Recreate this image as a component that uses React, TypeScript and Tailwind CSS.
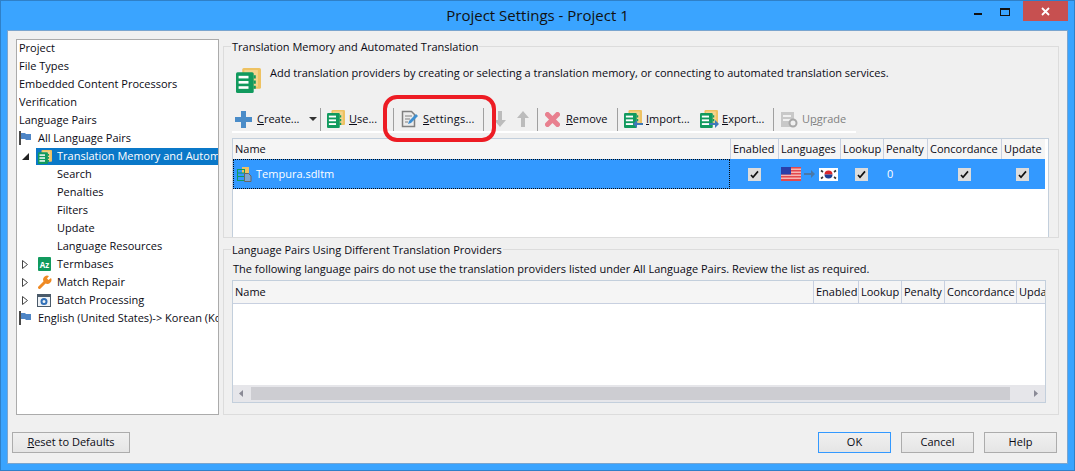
import type { ReactNode } from 'react';

const TmIcon = ({ size = 18 }: { size?: number }) => (
  <svg width={size} height={size} viewBox="0 0 24 24" className="shrink-0">
    <rect x="6" y="0" width="18" height="20" rx="1.500" fill="#eec262" />
    <rect x="8" y="2" width="13" height="16" fill="#f3d48e" />
    <rect x="0" y="4" width="17" height="20" rx="1.500" fill="#119a5e" />
    <rect x="2.500" y="7.500" width="9.500" height="2.500" fill="#fff" />
    <rect x="2.500" y="12.500" width="9.500" height="2.500" fill="#fff" />
    <rect x="2.500" y="17.500" width="9.500" height="2.500" fill="#fff" />
    <path d="M17 7h2v3h-2zM17 12h2v3h-2zM17 17h2v3h-2z" fill="#119a5e" />
  </svg>
);

// outline version used on the selected grid row
const TmFileIcon = () => (
  <svg width="15" height="15" viewBox="0 0 15 15" className="shrink-0">
    <rect x="5" y="0" width="7" height="6" fill="#eec262" />
    <rect x=".5" y="2.500" width="7" height="11" fill="none" stroke="#119a5e" />
    <path d="M1 6h6M1 9.500h6" stroke="#119a5e" />
    <path d="M7.500 6.500h4l2.500 2.500v5.500h-6.500z" fill="#7fa6cf" stroke="#666" />
  </svg>
);

const Flag = ({ className = '' }: { className?: string }) => (
  <svg width="13" height="14" viewBox="0 0 13 14" className={`shrink-0 ${className}`}>
    <rect x="0" y="0" width="2" height="14" fill="#4a4a4a" />
    <path d="M2 2h4l1 1h5v6H7L6 8H2z" fill="#4f86c6" />
  </svg>
);

const Check = () => (
  <span className="flex h-[13px] w-[13px] shrink-0 items-center justify-center bg-[#dcdcdc]">
    <svg width="9" height="9" viewBox="0 0 9 9">
      <path d="M1 5l2 2.200L8 1.400" fill="none" stroke="#111" strokeWidth="1.700" />
    </svg>
  </span>
);

const UsFlag = () => (
  <svg width="20" height="14" viewBox="0 0 20 14" className="shrink-0">
    <rect width="20" height="14" fill="#f6b5b0" />
    <path d="M0 0h20v1.500H0zM0 3h20v1.500H0zM0 6h20v1.500H0zM0 9h20v1.500H0zM0 12h20v2H0z" fill="#e2484c" />
    <rect width="10" height="7.500" fill="#2b3fa8" />
  </svg>
);

const KrFlag = () => (
  <svg width="19" height="13" viewBox="0 0 19 13" className="shrink-0">
    <rect width="19" height="13" fill="#fff" />
    <path d="M5.500 6.500a4 4 0 0 1 8 0z" fill="#d8262c" />
    <path d="M5.500 6.500a4 4 0 0 0 8 0z" fill="#1f3f94" />
    <path d="M2 2.500l2 1.500M2 10.500l2-1.500M17 2.500l-2 1.500M17 10.500l-2-1.500" stroke="#333" strokeWidth="1.600" />
  </svg>
);

const Expander = ({ open }: { open?: boolean }) =>
  open ? (
    <svg width="7" height="7" viewBox="0 0 7 7"><path d="M0 7h7V0z" fill="#222" /></svg>
  ) : (
    <svg width="6" height="9" viewBox="0 0 6 9"><path d="M.5.500l5 4-5 4z" fill="#fff" stroke="#444" /></svg>
  );

const TreeRow = ({
  label,
  expander,
  icon,
  selected,
  className = '',
}: {
  label: string;
  expander?: ReactNode;
  icon?: ReactNode;
  selected?: boolean;
  className?: string;
}) => (
  <div className={`flex h-[18px] items-start overflow-hidden whitespace-nowrap ${className}`}>
    {expander !== undefined && <span className="flex h-[17px] w-[17px] shrink-0 items-center pl-[3px]">{expander}</span>}
    {icon}
    <span className={selected ? 'h-[17px] flex-1 overflow-hidden bg-[#0a78c8] leading-[16px] text-white' : 'leading-[16px]'}>{label}</span>
  </div>
);

const Sep = ({ className = '' }: { className?: string }) => <span className={`h-[23px] w-px shrink-0 bg-[#a0a0a0] ${className}`} />;

const HeaderCell = ({ label, width, last }: { label: string; width: number; last?: boolean }) => (
  <div
    className={`flex h-full shrink-0 items-center overflow-hidden whitespace-nowrap pl-[2px] ${last ? '' : 'border-r border-[#c8d0e0]'}`}
    style={{ width }}
  >
    {label}
  </div>
);

const Button = ({ children, focused, className = '' }: { children: ReactNode; focused?: boolean; className?: string }) => (
  <button
    className={`h-[21px] w-[73px] border bg-gradient-to-b from-[#f0f0f0] to-[#e5e5e5] text-center ${
      focused ? 'border-[#3399ff]' : 'border-[#acacac]'
    } ${className}`}
  >
    {children}
  </button>
);

const topColumns = [
  { label: 'Name', width: 498 },
  { label: 'Enabled', width: 48 },
  { label: 'Languages', width: 62 },
  { label: 'Lookup', width: 43 },
  { label: 'Penalty', width: 44 },
  { label: 'Concordance', width: 74 },
  { label: 'Update', width: 43 },
];

const bottomColumns = [
  { label: 'Name', width: 581 },
  { label: 'Enabled', width: 45 },
  { label: 'Lookup', width: 43 },
  { label: 'Penalty', width: 43 },
  { label: 'Concordance', width: 72 },
  { label: 'Update', width: 28 },
];

export default function App() {
  return (
    <div className="relative flex h-[471px] w-[1075px] flex-col overflow-hidden border border-[#2f80c8] bg-[#3aa4ff] font-['Open_Sans',sans-serif] text-[11px] text-[#0a0a14]">
      {/* title bar */}
      <div className="relative flex h-[29px] shrink-0 items-center justify-center text-[15px] text-[#111]">
        Project Settings - Project 1
        <div className="absolute right-[6px] top-0 flex items-start">
          <span className="mr-[18px] mt-[12px] h-[2px] w-[8px] bg-[#111]" />
          <span className="mr-[13px] mt-[7px] h-[8px] w-[10px] border border-t-2 border-[#111]" />
          <span className="flex h-[20px] w-[45px] items-center justify-center bg-[#c75050]">
            <svg width="9" height="9" viewBox="0 0 9 9"><path d="M1 1l7 7M8 1l-7 7" stroke="#fff" strokeWidth="1.800" /></svg>
          </span>
        </div>
      </div>

      {/* client area */}
      <div className="mx-[6px] mb-[6px] flex flex-1 flex-col border border-[#7aa5cf] bg-[#f0f0f0] px-[8px] pt-[8px]">
        <div className="flex h-[376px] shrink-0">
          {/* tree */}
          <div className="flex w-[203px] shrink-0 flex-col border border-[#ababab] bg-white pl-[2px]">
            <TreeRow label="Project" />
            <TreeRow label="File Types" />
            <TreeRow label="Embedded Content Processors" />
            <TreeRow label="Verification" />
            <TreeRow label="Language Pairs" />
            <TreeRow label="All Language Pairs" icon={<Flag className="mr-[6px] mt-[1px]" />} />
            <TreeRow
              label="Translation Memory and Automated Translation"
              selected
              expander={<Expander open />}
              icon={
                <span className="flex h-[17px] w-[21px] shrink-0 items-center bg-[#0a78c8] pl-[2px]">
                  <TmIcon size={14} />
                </span>
              }
            />
            <TreeRow label="Search" className="pl-[38px]" />
            <TreeRow label="Penalties" className="pl-[38px]" />
            <TreeRow label="Filters" className="pl-[38px]" />
            <TreeRow label="Update" className="pl-[38px]" />
            <TreeRow label="Language Resources" className="pl-[38px]" />
            <TreeRow
              label="Termbases"
              expander={<Expander />}
              icon={
                <span className="ml-[2px] mr-[6px] mt-[1px] flex h-[14px] w-[13px] shrink-0 items-center justify-center rounded-[1px] border-t-2 border-[#119a5e] bg-[#119a5e] text-[8px] font-bold leading-none text-white">
                  Az
                </span>
              }
            />
            <TreeRow
              label="Match Repair"
              expander={<Expander />}
              icon={
                <svg width="14" height="14" viewBox="0 0 14 14" className="ml-[2px] mr-[5px] mt-[1px] shrink-0">
                  <path d="M1.500 12.500L7 7" stroke="#ef8a24" strokeWidth="3" strokeLinecap="round" />
                  <path d="M6 7a4 4 0 0 1 5-6L9 3.500 10.500 5 13 3a4 4 0 0 1-6 5z" fill="#ef8a24" />
                </svg>
              }
            />
            <TreeRow
              label="Batch Processing"
              expander={<Expander />}
              icon={
                <svg width="14" height="13" viewBox="0 0 14 13" className="ml-[1px] mr-[6px] mt-[2px] shrink-0">
                  <rect width="14" height="13" fill="#4a5a6a" />
                  <rect x="1" y="3" width="12" height="9" fill="#eef2f6" />
                  <circle cx="7" cy="7.500" r="2.500" fill="none" stroke="#2f6fb8" strokeWidth="2" />
                </svg>
              }
            />
            <TreeRow label="English (United States)-> Korean (Korea)" icon={<Flag className="mr-[6px] mt-[1px]" />} />
          </div>

          {/* right side */}
          <div className="ml-[4px] flex w-[836px] shrink-0 flex-col pt-[7px]">
            <div className="relative flex h-[192px] shrink-0 flex-col border border-[#dcdcdc]">
              <span className="absolute left-[7px] top-[-9px] bg-[#f0f0f0] px-px leading-[17px]">Translation Memory and Automated Translation</span>
              <div className="ml-[12px] mt-[21px] flex h-[25px] shrink-0">
                <TmIcon size={25} />
                <span className="ml-[9px] mt-[-4px] leading-[17px]">
                  Add translation providers by creating or selecting a translation memory, or connecting to automated translation services.
                </span>
              </div>

              {/* toolbar */}
              <div className="ml-[8px] mt-[14px] flex h-[26px] w-[624px] shrink-0 items-center border-b-2 border-white">
                <svg width="17" height="17" viewBox="0 0 17 17" className="ml-[3px] shrink-0"><path d="M6 0h5v6h6v5h-6v6H6v-6H0V6h6z" fill="#4a8cc8" /></svg>
                <span className="ml-[5px] w-[44px] whitespace-nowrap"><u>C</u>reate...</span>
                <svg width="8" height="4" viewBox="0 0 8 4" className="ml-[8px] shrink-0"><path d="M0 0h8L4 4z" fill="#333" /></svg>
                <Sep className="ml-[3px]" />
                <span className="ml-[6px]"><TmIcon /></span>
                <span className="ml-[4px] w-[28px] whitespace-nowrap"><u>U</u>se...</span>
                <Sep className="ml-[16px]" />
                <svg width="18" height="18" viewBox="0 0 18 18" className="ml-[7px] shrink-0">
                  <path d="M1.500 1.500h9l3 3v12h-12z" fill="#ececec" stroke="#808080" strokeWidth="1.500" />
                  <path d="M4 6h7M4 9h5M4 12h3" stroke="#808080" />
                  <path d="M7 14l1-3 7-7 2 2-7 7z" fill="#3f8fd0" />
                </svg>
                <span className="ml-[4px] w-[52px] whitespace-nowrap tracking-[0.2px]"><u>S</u>ettings...</span>
                <Sep className="ml-[8px]" />
                <svg width="12" height="16" viewBox="0 0 12 16" className="ml-[10px] shrink-0"><path d="M4 0h4v9h4l-6 7-6-7h4z" fill="#bcbcbc" /></svg>
                <svg width="12" height="16" viewBox="0 0 12 16" className="ml-[11px] shrink-0"><path d="M4 16h4V7h4L6 0 0 7h4z" fill="#bcbcbc" /></svg>
                <Sep className="ml-[8px]" />
                <svg width="15" height="15" viewBox="0 0 15 15" className="ml-[7px] shrink-0"><path d="M2.500 2.500l10 10M12.500 2.500l-10 10" stroke="#e8808f" strokeWidth="5" strokeLinecap="round" /></svg>
                <span className="ml-[6px] w-[44px] whitespace-nowrap"><u>R</u>emove</span>
                <Sep className="ml-[7px]" />
                <span className="relative ml-[6px]">
                  <TmIcon />
                  <svg width="10" height="8" viewBox="0 0 10 8" className="absolute bottom-0 right-[-1px]"><path d="M10 3H4V0L0 4l4 4V5h6z" fill="#3f78b8" /></svg>
                </span>
                <span className="ml-[4px] w-[45px] whitespace-nowrap"><u>I</u>mport...</span>
                <span className="relative ml-[9px]">
                  <TmIcon />
                  <svg width="10" height="8" viewBox="0 0 10 8" className="absolute bottom-0 right-[-1px]"><path d="M0 3h6V0l4 4-4 4V5H0z" fill="#3f78b8" /></svg>
                </span>
                <span className="ml-[4px] w-[43px] whitespace-nowrap"><u>E</u>xport...</span>
                <Sep className="ml-[8px]" />
                <svg width="17" height="17" viewBox="0 0 17 17" className="ml-[7px] shrink-0">
                  <rect x="0" y="1" width="13" height="15" fill="#c8c8c8" />
                  <rect x="2" y="4" width="8" height="2" fill="#f0f0f0" />
                  <rect x="2" y="8" width="8" height="2" fill="#f0f0f0" />
                  <circle cx="12" cy="12" r="3.500" fill="#f0f0f0" stroke="#a8a8a8" strokeWidth="2" />
                </svg>
                <span className="ml-[4px] whitespace-nowrap text-[#808080]">U<u>p</u>grade</span>
              </div>

              {/* providers table */}
              <div className="ml-[8px] mr-[9px] mt-[5px] flex flex-1 flex-col border border-b-0 border-[#c3cfdc] bg-white">
                <div className="flex h-[20px] w-[812px] shrink-0 overflow-hidden bg-[#f5f5f5]">
                  {topColumns.map((c, i) => (
                    <HeaderCell key={c.label} label={c.label} width={c.width} last={i === topColumns.length - 1} />
                  ))}
                </div>
                <div className="flex h-[30px] w-[812px] shrink-0 items-center bg-[#3399ff] text-white">
                  <div className="flex h-full w-[497px] shrink-0 items-center gap-[4px] border border-dotted border-[#0a0a0a] pl-[3px]">
                    <TmFileIcon />
                    Tempura.sdltm
                  </div>
                  <span className="ml-[18px]"><Check /></span>
                  <span className="ml-[20px]"><UsFlag /></span>
                  <svg width="11" height="8" viewBox="0 0 11 8" className="ml-[3px] shrink-0"><path d="M0 3h7V0l4 4-4 4V5H0z" fill="#4a78a8" /></svg>
                  <span className="ml-[4px]"><KrFlag /></span>
                  <span className="ml-[17px]"><Check /></span>
                  <span className="ml-[19px] w-[8px]">0</span>
                  <span className="ml-[63px]"><Check /></span>
                  <span className="ml-[45px]"><Check /></span>
                </div>
              </div>
            </div>

            <div className="relative mt-[11px] flex flex-1 flex-col border border-[#dcdcdc]">
              <span className="absolute left-[7px] top-[-9px] bg-[#f0f0f0] px-px leading-[17px]">Language Pairs Using Different Translation Providers</span>
              <div className="ml-[9px] mt-[10px] h-[17px] leading-[17px]">
                The following language pairs do not use the translation providers listed under All Language Pairs. Review the list as required.
              </div>
              {/* second table */}
              <div className="ml-[8px] mt-[3px] flex h-[123px] w-[814px] flex-col border border-[#c3cfdc] bg-white">
                <div className="flex h-[23px] shrink-0 overflow-hidden border-b border-[#c8d0e0] bg-[#f5f5f5]">
                  {bottomColumns.map((c, i) => (
                    <HeaderCell key={c.label} label={c.label} width={c.width} last={i === bottomColumns.length - 1} />
                  ))}
                </div>
                <div className="flex-1" />
                <div className="flex h-[17px] shrink-0 items-center bg-[#e6e6ea]">
                  <svg width="4" height="7" viewBox="0 0 4 7" className="ml-[6px] shrink-0"><path d="M4 0v7L0 3.500z" fill="#8a8a96" /></svg>
                  <span className="ml-[8px] h-[13px] w-[759px] shrink-0 bg-[#cdcdd2]" />
                  <svg width="4" height="7" viewBox="0 0 4 7" className="ml-[24px] shrink-0"><path d="M0 0v7l4-3.500z" fill="#8a8a96" /></svg>
                </div>
              </div>
            </div>
          </div>
        </div>

        {/* footer buttons */}
        <div className="mt-[17px] flex">
          <Button className="ml-[-4px] w-[118px] px-0"><u>R</u>eset to Defaults</Button>
          <Button focused className="ml-auto">OK</Button>
          <Button className="ml-[10px]">Cancel</Button>
          <Button className="ml-[10px] mr-[2px]">Help</Button>
        </div>
      </div>

      {/* red callout drawn over the toolbar */}
      <div className="absolute left-[382px] top-[94px] h-[47px] w-[113px] rounded-[14px] border-[4px] border-[#ed1c24]" />
    </div>
  );
}
